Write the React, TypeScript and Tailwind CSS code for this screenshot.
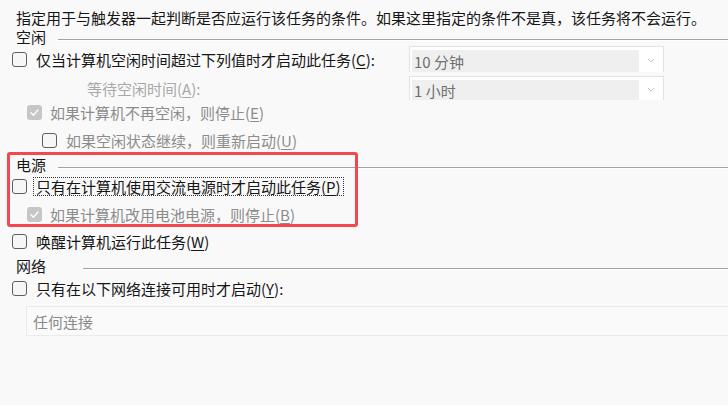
import React from 'react'

const gray = 'text-[#8c8c8c]'

function Box({ checked = false }: { checked?: boolean }) {
  if (checked) {
    return (
      <div className="w-[15px] h-[15px] rounded-[3px] bg-[#c6c6c6] flex items-center justify-center shrink-0">
        <svg width="11" height="11" viewBox="0 0 11 11" fill="none">
          <path d="M2 5.8 L4.4 8.2 L9 3" stroke="#ffffff" strokeWidth="1.3" strokeLinecap="round" strokeLinejoin="round" />
        </svg>
      </div>
    )
  }
  return <div className="w-[15px] h-[15px] rounded-[3px] border border-[#5f5f5f] bg-[#f6f6f6] shrink-0" />
}

function Key({ k }: { k: string }) {
  return (
    <>
      (<span className="underline underline-offset-2 decoration-1">{k}</span>)
    </>
  )
}

function Heading({ label, lineStart }: { label: string; lineStart: string }) {
  return (
    <div className="h-[16px] flex items-center">
      <div className={`${lineStart} pl-[16px] shrink-0`}>{label}</div>
      <div className="flex-1 h-[2px] mt-[7px] border-t border-[#a3a3a3] border-b border-b-white" />
    </div>
  )
}

function Chevron() {
  return (
    <svg width="8" height="5" viewBox="0 0 8 5" fill="none">
      <path d="M1 1 L4 4 L7 1" stroke="#c2c2c2" strokeWidth="1" />
    </svg>
  )
}

function Dropdown({ value, h }: { value: string; h: string }) {
  return (
    <div className={`w-[255px] ${h} border-t border-x border-[#e2e2e2] bg-white pt-[3px] pl-[2px] flex`}>
      <div className="w-[227px] bg-[#efefef] text-[#707070] pl-[2px] flex items-center">{value}</div>
      <div className="flex-1 flex items-center justify-center pb-[1px]">
        <Chevron />
      </div>
    </div>
  )
}

export default function App() {
  return (
    <div className="relative w-[728px] h-[405px] overflow-hidden bg-[#f9f9f9] text-[15px] leading-none text-[#161616] font-['Noto_Sans_CJK_SC','Noto_Sans',sans-serif]">
      <div className="pt-[7px] flex flex-col">
        <div className="h-[21px] flex items-center pl-[16px] whitespace-nowrap">
          指定用于与触发器一起判断是否应运行该任务的条件。如果这里指定的条件不是真，该任务将不会运行。
        </div>

        <Heading label="空闲" lineStart="w-[58px]" />
        <div className="h-[2px]" />

        <div className="h-[26px] flex items-center">
          <div className="w-[409px] flex items-center pl-[12px]">
            <Box />
            <span className="ml-[9px] whitespace-nowrap">
              仅当计算机空闲时间超过下列值时才启动此任务<Key k="C" />:
            </span>
          </div>
          <Dropdown value="10 分钟" h="h-[26px]" />
        </div>

        <div className="mt-[4px] h-[24px] flex items-center">
          <div className="w-[409px] pl-[87px] text-[#a8a8a8] whitespace-nowrap">
            等待空闲时间<Key k="A" />:
          </div>
          <Dropdown value="1 小时" h="h-[24px]" />
        </div>

        <div className="h-[24px] flex items-center pl-[27px]">
          <Box checked />
          <span className={`ml-[8px] ${gray}`}>
            如果计算机不再空闲，则停止<Key k="E" />
          </span>
        </div>

        <div className="h-[32px] flex items-center pl-[42px]">
          <Box />
          <span className={`ml-[9px] ${gray}`}>
            如果空闲状态继续，则重新启动<Key k="U" />
          </span>
        </div>

        <Heading label="电源" lineStart="w-[58px]" />

        <div className="h-[28px] flex items-center pl-[12px]">
          <Box />
          <span className="ml-[6px] px-[2px] py-[1px] border border-dotted border-[#333]">
            只有在计算机使用交流电源时才启动此任务<Key k="P" />
          </span>
        </div>

        <div className="h-[28px] flex items-center pl-[27px]">
          <Box checked />
          <span className={`ml-[8px] ${gray}`}>
            如果计算机改用电池电源，则停止<Key k="B" />
          </span>
        </div>

        <div className="h-[26px] flex items-center pl-[12px]">
          <Box />
          <span className="ml-[9px]">
            唤醒计算机运行此任务<Key k="W" />
          </span>
        </div>

        <div className="h-[22px] flex items-center">
          <div className="w-[83px] pl-[16px] shrink-0">网络</div>
          <div className="flex-1 h-[2px] mt-[7px] border-t border-[#a3a3a3] border-b border-b-white" />
        </div>

        <div className="h-[24px] flex items-center pl-[12px]">
          <Box />
          <span className="ml-[9px]">
            只有在以下网络连接可用时才启动<Key k="Y" />:
          </span>
        </div>

        <div className="mt-[6px] ml-[26px] h-[30px] border border-r-0 border-[#ebebeb] bg-[#fafafa] flex items-center pl-[6px] text-[#8a8a8a]">
          任何连接
        </div>
      </div>

      <div className="absolute left-[7px] top-[152px] w-[351px] h-[75px] border-[3px] border-[#f2484e] rounded-[3px] pointer-events-none" />
    </div>
  )
}
